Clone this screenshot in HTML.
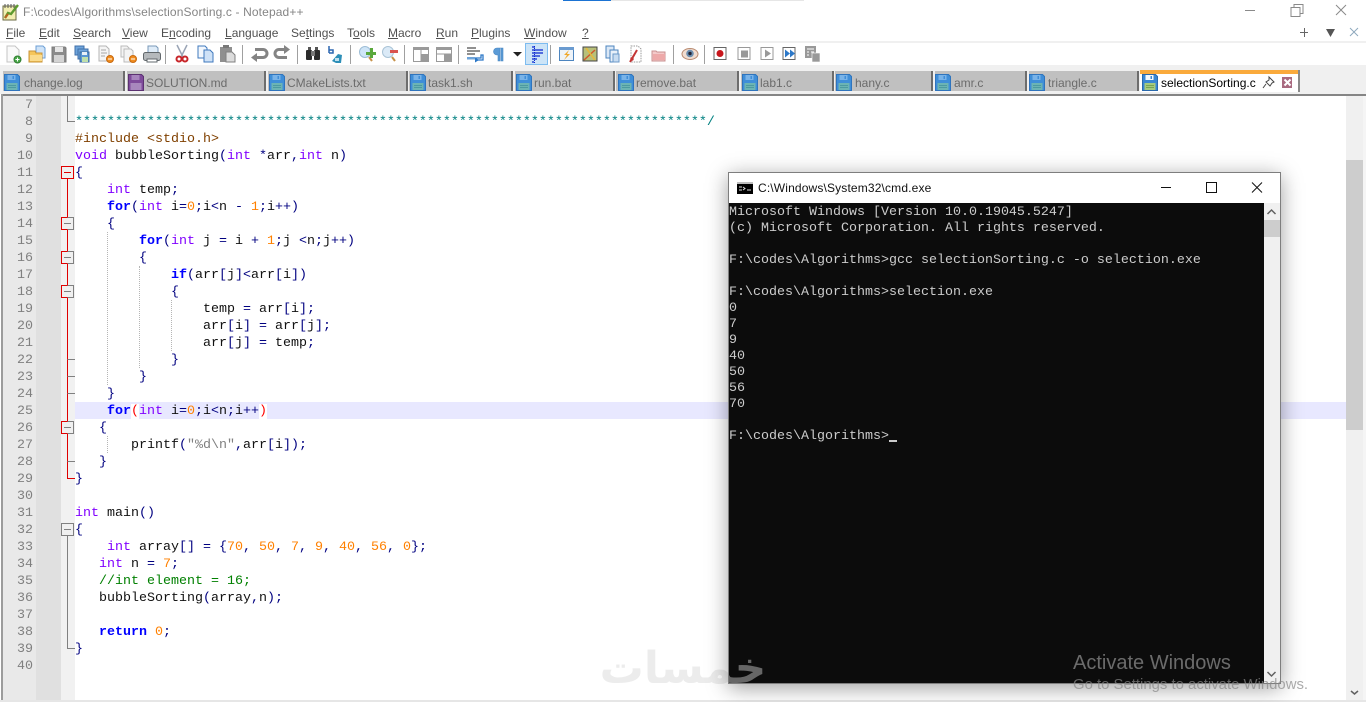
<!DOCTYPE html>
<html><head><meta charset="utf-8"><title>Notepad++</title>
<style>
html,body{margin:0;padding:0;width:1366px;height:702px;overflow:hidden;background:#fff}
.a{position:absolute;white-space:pre}
.ui{font-family:"Liberation Sans",sans-serif;font-size:12px;line-height:16px}
.m{color:#505050;top:25px}
.m u{text-decoration-thickness:1px;text-underline-offset:1px}
.t{position:absolute;top:71px;height:20px;background:#c0c0c0;border-right:2px solid #6d6d6d;box-sizing:border-box}
.tt{position:absolute;top:75px;font:12px/16px "Liberation Sans",sans-serif;color:#6b6b6b;white-space:pre}
#code{position:absolute;left:75px;top:97px;margin:0;font:13.333px/17px "Liberation Mono",monospace;color:#111;white-space:pre}
#nums{position:absolute;left:3px;top:97px;width:30px;text-align:right;margin:0;font:13.333px/17px "Liberation Mono",monospace;color:#808080;white-space:pre}
.k{color:#8000ff}.b{color:#0000ff;font-weight:bold}.n{color:#ff8000}.o{color:#000080}.g{color:#008000}.p{color:#804000}.s{color:#808080}.d{color:#008080}.r{color:#f00}
.w{background:#fff}
.ig{position:absolute;width:0;border-left:1px dotted #b5b5b5}
#con{position:absolute;left:729px;top:205px;margin:0;font:13.333px/16px "Liberation Mono",monospace;color:#ccc;white-space:pre}
</style></head><body>
<svg class="a" style="left:0;top:0" width="1366" height="2"><rect x="563" width="48" height="1" fill="#1b73d3"/><rect x="611" width="193" height="1" fill="#e6e6e6"/></svg>

<!-- app icon -->
<svg class="a" style="left:2px;top:3px" width="18" height="18" viewBox="0 0 18 18"><rect x="1" y="3" width="13" height="14" fill="#f2eeb0" stroke="#6a6a40"/><path d="M3 1v4M6 1v4M9 1v4M12 1v4" stroke="#555"/><path d="M3 15l3-5 3 1 7-9" stroke="#5d9a2f" stroke-width="2.4" fill="none"/><path d="M3 15l3-4" stroke="#b8641f" stroke-width="2"/></svg>
<div class="a ui" style="left:23px;top:4px;color:#858585;letter-spacing:.13px">F:\codes\Algorithms\selectionSorting.c - Notepad++</div>

<!-- window controls -->
<svg class="a" style="left:1240px;top:0" width="126" height="42" fill="none" stroke="#8a8a8a"><path d="M5 10.500h10"/><path d="M51 7.500h9v9h-9zM54 7.500v-3h9v9h-3"/><path d="M96 5l10 10M106 5l-10 10"/><path d="M60 32.500h8M64.500 28v9" stroke="#666"/><path d="M86 29h9l-4.500 8z" fill="#555" stroke="none"/><path d="M110 28l8 8M118 28l-8 8" stroke="#8fa9bd"/></svg>

<!-- menu -->
<div class="a ui m" style="left:6px"><u>F</u>ile</div>
<div class="a ui m" style="left:39px"><u>E</u>dit</div>
<div class="a ui m" style="left:73px"><u>S</u>earch</div>
<div class="a ui m" style="left:122px"><u>V</u>iew</div>
<div class="a ui m" style="left:161px">E<u>n</u>coding</div>
<div class="a ui m" style="left:225px"><u>L</u>anguage</div>
<div class="a ui m" style="left:291px">Se<u>t</u>tings</div>
<div class="a ui m" style="left:347px">T<u>o</u>ols</div>
<div class="a ui m" style="left:388px"><u>M</u>acro</div>
<div class="a ui m" style="left:436px"><u>R</u>un</div>
<div class="a ui m" style="left:471px"><u>P</u>lugins</div>
<div class="a ui m" style="left:524px"><u>W</u>indow</div>
<div class="a ui m" style="left:582px"><u>?</u></div>

<div class="a" style="left:0;top:41px;width:1366px;height:2px;background:#f0f0f0"></div>

<!-- toolbar -->
<svg class="a" style="left:0;top:43px" width="1366" height="24" viewBox="0 43 1366 24">
<g stroke="#a0a0a0"><path d="M165.500 45v19M242.500 45v19M297.500 45v19M350.500 45v19M404.500 45v19M458.500 45v19M550.500 45v19M673.500 45v19M704.500 45v19"/></g>
<!-- new -->
<path d="M7 46h8l4 4v12H7z" fill="#fafafa" stroke="#c4c4c4"/><circle cx="17.500" cy="59.500" r="3.500" fill="#4aa84a" stroke="#2f7d2f"/><path d="M15.500 59.500h4M17.500 57.500v4" stroke="#fff"/>
<!-- open -->
<path d="M36 46h7l2 2v10h-9z" fill="#cfe3f7" stroke="#6c9fd6"/><path d="M29 51h6l1 2h6v9H29z" fill="#f6c65a" stroke="#c8943a"/><rect x="30" y="55" width="12" height="6" fill="#fbdc8d"/>
<!-- save -->
<path d="M52 47h13l1 1v14H52z" fill="#8b8b8b" stroke="#7b7b7b"/><rect x="55" y="47" width="8" height="5" fill="#e6e6e6"/><rect x="54" y="55" width="10" height="7" fill="#d4d4d4"/>
<!-- save all -->
<path d="M75 46h9v9h-9z" fill="#6fa5dc" stroke="#3f6fa8"/><path d="M78 49h10v10H78z" fill="#6fa5dc" stroke="#3f6fa8"/><path d="M80 52h9v10h-9z" fill="#5a97d4" stroke="#3b6a9e"/><rect x="82" y="52" width="5" height="3" fill="#e8f0f8"/><rect x="82" y="57" width="6" height="5" fill="#bfe0ac"/>
<!-- close -->
<path d="M99 46h7l3 3v12H99z" fill="#f5f5f5" stroke="#b5b5b5"/><path d="M101 50h5M101 53h6M101 56h4" stroke="#a8a8a8"/><circle cx="110" cy="59" r="3.500" fill="#f08c1e" stroke="#c86a10"/><path d="M108 59h4" stroke="#fff"/>
<!-- close all -->
<path d="M121 46h6l2 2v9h-8z" fill="#f4f4f4" stroke="#bbb"/><path d="M124 49h7l2 2v11h-9z" fill="#f4f4f4" stroke="#bbb"/><circle cx="133" cy="59" r="3.500" fill="#f08c1e" stroke="#c86a10"/><path d="M131 59h4" stroke="#fff"/>
<!-- print -->
<path d="M148 46h8l2 2v5h-10z" fill="#dfecf8" stroke="#7898b8"/><rect x="143.500" y="52.500" width="17" height="8" rx="2" fill="#b5b9bc" stroke="#62686c"/><rect x="147" y="59" width="10" height="3" fill="#fff" stroke="#62686c"/>
<!-- cut -->
<path d="M181 57L187 45M183 57L177 45" stroke="#9aa5b5" stroke-width="1.500"/><circle cx="179" cy="59" r="2.500" fill="none" stroke="#c8262a" stroke-width="2"/><circle cx="185" cy="59" r="2.500" fill="none" stroke="#c8262a" stroke-width="2"/>
<!-- copy -->
<path d="M198 46h7l2 2v10h-9z" fill="#f2f7fd" stroke="#3f78bd"/><path d="M204 50h6l3 3v9h-9z" fill="#cfe2f7" stroke="#3f78bd"/>
<!-- paste -->
<path d="M220 47h12v15h-12z" fill="#8f8f8f"/><path d="M226 52h6l3 3v7h-9z" fill="#dcdcdc" stroke="#808080"/><rect x="223" y="45" width="6" height="3" fill="#777"/>
<!-- undo redo -->
<path d="M255 49.500h8a4 4 0 0 1 0 8h-6" fill="none" stroke="#848484" stroke-width="3"/><path d="M251 57.500l6-4.500v9z" fill="#848484"/>
<path d="M286 49.500h-7a4 4 0 0 0 0 8h8" fill="none" stroke="#848484" stroke-width="3"/><path d="M290 49.500l-6-4.500v9z" fill="#848484"/>
<!-- find -->
<rect x="306" y="50" width="6" height="10" rx="1" fill="#2b2b2b"/><rect x="314" y="50" width="6" height="10" rx="1" fill="#2b2b2b"/><rect x="311" y="51" width="4" height="5" fill="#777"/><rect x="308" y="47" width="3" height="3" fill="#555"/><rect x="315" y="47" width="3" height="3" fill="#555"/>
<!-- replace -->
<path d="M329 46v7M329 50h4v3h-4" fill="none" stroke="#2c67b0" stroke-width="1.500"/><path d="M332 61l6-7 4 1-1 8h-5z" fill="#2d8fb8"/><path d="M335 58h4v3h-4z" fill="#bfe0ee"/>
<!-- zoom in / out -->
<circle cx="365" cy="52" r="5.500" fill="#cfe5f7" stroke="#9dbdd6"/><path d="M369 57l3 4" stroke="#c7924a" stroke-width="2"/><path d="M366 52h4v-4h3v4h3v3h-3v3h-3v-3h-4z" fill="#5aa83c"/>
<circle cx="388" cy="52" r="5.500" fill="#dbeaf7" stroke="#a9c3d6"/><path d="M392 57l3 4" stroke="#c7924a" stroke-width="2"/><rect x="390" y="50" width="8" height="3" fill="#d9534f"/>
<!-- sync -->
<path d="M413.500 47.500h15v14h-15zM421 47v14" fill="#fff" stroke="#9a9a9a"/><rect x="421" y="54" width="8" height="8" fill="#9a9a9a"/><rect x="413" y="47" width="16" height="3" fill="#9a9a9a"/>
<path d="M436.500 47.500h15v14h-15z" fill="#fff" stroke="#9a9a9a"/><rect x="436" y="47" width="16" height="3" fill="#9a9a9a"/><rect x="444" y="54" width="8" height="8" fill="#9a9a9a"/><path d="M436 54h16" stroke="#9a9a9a"/>
<!-- wrap -->
<path d="M467 48h9M467 51h13M467 54h8" stroke="#222"/><path d="M467 58h14v-3h2v5h-8" fill="none" stroke="#2c78c8" stroke-width="1.300"/><rect x="467" y="57" width="8" height="2.500" fill="#6ea4da"/><path d="M479 60l-4-2.500v5z" fill="#2c78c8"/>
<!-- pilcrow -->
<path d="M501 48h-4a3.500 3.500 0 0 0 0 7h1v6h2V48zM501 48h2v13h-2z" fill="#5b9bd6" stroke="#4a88c4" stroke-width=".6"/>
<path d="M513 52h9l-4.500 4.500z" fill="#222"/>
<!-- indent guide (active) -->
<rect x="525.500" y="43.500" width="22" height="21" fill="#cce4f7" stroke="#7dbcf0"/>
<path d="M532 47h3M532 50h11M532 53h11M532 56h8M532 59h5M532 62h2" stroke="#0a24d0" stroke-width="1.300"/><path d="M534.500 46v17" stroke="#0a24d0" stroke-dasharray="1 1"/>
<!-- udl etc -->
<rect x="559.500" y="47.500" width="14" height="13" fill="#eef3f8" stroke="#4d85bf"/><rect x="559" y="47" width="15" height="3" fill="#6a9bd0"/><path d="M569 50l-5 5h3l-3 5 6-6h-3l2-4z" fill="#f0a82a"/>
<rect x="583" y="47" width="14" height="14" fill="#b7c07a" stroke="#444"/><path d="M584 60l11-10" stroke="#d2572b" stroke-width="1.500"/><path d="M586 48l9 12" stroke="#e6b83d" stroke-width="1.500"/>
<path d="M606 46h8v12h-8z" fill="#dbe8f6" stroke="#4d85bf"/><path d="M610 50h8v12h-8z" fill="#e8f0f9" stroke="#4d85bf"/><path d="M613 54h6v8h-6z" fill="#c8dcf1" stroke="#6c9ac9"/>
<path d="M631 46h7l3 3v13h-10z" fill="#fff" stroke="#9a9a9a" stroke-dasharray="1.500 1"/><path d="M630 62l7-12" stroke="#c33535" stroke-width="2"/><circle cx="632" cy="59" r="1.700" fill="#c33535"/>
<path d="M652 51h4l1 1h8v9h-13z" fill="#f3c9c9" stroke="#c99090"/><rect x="653" y="54" width="12" height="6" fill="#eda9a9"/>
<!-- eye -->
<ellipse cx="690" cy="54" rx="8" ry="5.500" fill="#f2ddd0" stroke="#b98a70"/><circle cx="690" cy="53.500" r="3.800" fill="#6e8faf"/><circle cx="690" cy="53.500" r="1.700" fill="#223"/>
<!-- macro -->
<rect x="714" y="47.500" width="12" height="12" fill="#fff" stroke="#666"/><circle cx="720" cy="53.500" r="3.500" fill="#c8161c"/>
<rect x="738" y="47.500" width="12" height="12" fill="#fff" stroke="#999"/><rect x="741" y="50.500" width="7" height="7" fill="#999"/>
<rect x="761" y="47.500" width="12" height="12" fill="#fff" stroke="#999"/><path d="M765 49.500l6 4-6 4z" fill="#999"/>
<rect x="783" y="47.500" width="12" height="12" fill="#fff" stroke="#666"/><path d="M785 49.500l5 4-5 4zM790 49.500l5 4-5 4z" fill="#2c78c8"/>
<rect x="805" y="46" width="11" height="12" fill="#999"/><path d="M807 49h7M807 52h2M811 52h3M807 55h2" stroke="#fff"/><rect x="812" y="53" width="8" height="9" fill="#999" stroke="#fff" stroke-width=".6"/>
</svg>

<div class="a" style="left:0;top:65px;width:1366px;height:29px;background:#f0f0f0"></div>

<svg width="0" height="0" style="position:absolute"><symbol id="f" viewBox="0 0 16 17"><path d="M.5.500h13l2 2v14H.500z" fill="#3f8ed8" stroke="#2f74bd"/><rect x="3.500" y="1" width="8" height="5" fill="#79b3e8"/><rect x="8.500" y="2" width="1.500" height="3" fill="#3f8ed8"/><rect x="2.500" y="9" width="11" height="7" fill="#6cb4b4"/><path d="M4 11.500h8M4 13.500h8" stroke="#4c9aa0"/></symbol>
<symbol id="fp" viewBox="0 0 16 17"><path d="M.5.500h13l2 2v14H.500z" fill="#7e4a9a" stroke="#5c3272"/><rect x="3.500" y="1" width="8" height="5" fill="#a784bd"/><rect x="2.500" y="9" width="11" height="7" fill="#a887bd"/></symbol>
<symbol id="fa" viewBox="0 0 16 17"><path d="M.5.500h13l2 2v14H.500z" fill="#3a87d2" stroke="#2a69ad"/><rect x="3.500" y="1" width="8" height="5" fill="#f4f8fc"/><rect x="8.500" y="2" width="1.500" height="3" fill="#3a87d2"/><rect x="2.500" y="9" width="11" height="7" fill="#a6ca7e"/><path d="M4 11.500h8M4 13.500h8" stroke="#78a452"/></symbol></svg>

<!-- tabs -->
<div class="t" style="left:3px;width:122px"></div>
<div class="t" style="left:127px;width:139px"></div>
<div class="t" style="left:268px;width:140px"></div>
<div class="t" style="left:409px;width:104px"></div>
<div class="t" style="left:515px;width:100px"></div>
<div class="t" style="left:616px;width:123px"></div>
<div class="t" style="left:741px;width:93px"></div>
<div class="t" style="left:835px;width:98px"></div>
<div class="t" style="left:935px;width:92px"></div>
<div class="t" style="left:1029px;width:110px"></div>
<div class="a" style="left:1140px;top:70px;width:158px;height:22px;background:#fff;border-right:2px solid #8a8a8a"></div>
<div class="a" style="left:1140px;top:70px;width:158px;height:4px;background:#faaa3c"></div>

<svg class="a" style="left:4px;top:74px" width="16" height="17"><use href="#f"/></svg>
<svg class="a" style="left:128px;top:74px" width="16" height="17"><use href="#fp"/></svg>
<svg class="a" style="left:269px;top:74px" width="16" height="17"><use href="#f"/></svg>
<svg class="a" style="left:410px;top:74px" width="16" height="17"><use href="#f"/></svg>
<svg class="a" style="left:516px;top:74px" width="16" height="17"><use href="#f"/></svg>
<svg class="a" style="left:618px;top:74px" width="16" height="17"><use href="#f"/></svg>
<svg class="a" style="left:742px;top:74px" width="16" height="17"><use href="#f"/></svg>
<svg class="a" style="left:836px;top:74px" width="16" height="17"><use href="#f"/></svg>
<svg class="a" style="left:935px;top:74px" width="16" height="17"><use href="#f"/></svg>
<svg class="a" style="left:1029px;top:74px" width="16" height="17"><use href="#f"/></svg>
<svg class="a" style="left:1142px;top:74px" width="16" height="17"><use href="#fa"/></svg>

<div class="tt" style="left:24px">change.log</div>
<div class="tt" style="left:146px">SOLUTION.md</div>
<div class="tt" style="left:287px">CMakeLists.txt</div>
<div class="tt" style="left:428px">task1.sh</div>
<div class="tt" style="left:534px">run.bat</div>
<div class="tt" style="left:636px">remove.bat</div>
<div class="tt" style="left:760px">lab1.c</div>
<div class="tt" style="left:855px">hany.c</div>
<div class="tt" style="left:954px">amr.c</div>
<div class="tt" style="left:1048px">triangle.c</div>
<div class="tt" style="left:1161px;color:#000">selectionSorting.c</div>
<svg class="a" style="left:1262px;top:75px" width="30" height="16" fill="none"><path d="M7 2l5 5-2 1-2 3-4-4 3-2zM4 9l-3 4" stroke="#444"/><rect x="20" y="2" width="11" height="11" fill="#a96a80"/><path d="M22.500 4.500l6 6M28.500 4.500l-6 6" stroke="#fff" stroke-width="2"/></svg>

<div class="a" style="left:1px;top:94px;width:1365px;height:2px;background:#858585"></div>

<!-- editor -->
<div class="a" style="left:1px;top:94px;width:2px;height:606px;background:#9c9c9c"></div>
<div class="a" style="left:3px;top:96px;width:33px;height:604px;background:#e9e9e9"></div>
<div class="a" style="left:36px;top:96px;width:25px;height:604px;background:#e0e0e0"></div>
<div class="a" style="left:61px;top:96px;width:14px;height:604px;background:#f1f1f1"></div>
<div class="a" style="left:75px;top:402px;width:1271px;height:17px;background:#e8e8ff"></div>
<div class="a" style="left:0;top:700px;width:1366px;height:2px;background:#e6e6e6"></div>

<pre id="nums">7
8
9
10
11
12
13
14
15
16
17
18
19
20
21
22
23
24
25
26
27
28
29
30
31
32
33
34
35
36
37
38
39
40</pre>

<svg class="a" style="left:61px;top:96px" width="14" height="604" viewBox="61 96 14 604" fill="none">
<path d="M67.500 96v25.500H75" stroke="#808080"/>
<path d="M67.500 172v306.500H75" stroke="#e00000"/>
<path d="M67.500 359.500H75M67.500 376.500H75M67.500 393.500H75M67.500 461.500H75" stroke="#808080"/>
<path d="M67.500 529v119.500H75" stroke="#808080"/>
<g fill="#f0f0f0" stroke="#808080">
<rect x="61.500" y="217.500" width="12" height="12"/><rect x="61.500" y="251.500" width="12" height="12"/><rect x="61.500" y="285.500" width="12" height="12"/><rect x="61.500" y="421.500" width="12" height="12"/>
<rect x="61.500" y="523.500" width="12" height="12"/>
</g>
<rect x="61.500" y="166.500" width="12" height="12" fill="#f0f0f0" stroke="#e00000"/>
<path d="M64 172.500h7" stroke="#e00000"/>
<path d="M64 223.500h7M64 257.500h7M64 291.500h7M64 427.500h7M64 529.500h7" stroke="#808080"/>
<path d="M67.500 217.500h-6v12h6M67.500 251.500h-6v12h6M67.500 285.500h-6v12h6M67.500 421.500h-6v12h6" stroke="#e00000"/>
</svg>

<div class="ig" style="left:107px;top:232px;height:153px"></div>
<div class="ig" style="left:139px;top:266px;height:102px"></div>
<div class="ig" style="left:171px;top:300px;height:51px"></div>
<div class="ig" style="left:107px;top:436px;height:17px"></div>

<pre id="code">

<span class="d">*******************************************************************************/</span>
<span class="p">#include &lt;stdio.h&gt;</span>
<span class="k">void</span> bubbleSorting<span class="o">(</span><span class="k">int</span> <span class="o">*</span>arr<span class="o">,</span><span class="k">int</span> n<span class="o">)</span>
<span class="o">{</span>
    <span class="k">int</span> temp<span class="o">;</span>
    <span class="b">for</span><span class="o">(</span><span class="k">int</span> i<span class="o">=</span><span class="n">0</span><span class="o">;</span>i<span class="o">&lt;</span>n <span class="o">-</span> <span class="n">1</span><span class="o">;</span>i<span class="o">++)</span>
    <span class="o">{</span>
        <span class="b">for</span><span class="o">(</span><span class="k">int</span> j <span class="o">=</span> i <span class="o">+</span> <span class="n">1</span><span class="o">;</span>j <span class="o">&lt;</span>n<span class="o">;</span>j<span class="o">++)</span>
        <span class="o">{</span>
            <span class="b">if</span><span class="o">(</span>arr<span class="o">[</span>j<span class="o">]&lt;</span>arr<span class="o">[</span>i<span class="o">])</span>
            <span class="o">{</span>
                temp <span class="o">=</span> arr<span class="o">[</span>i<span class="o">];</span>
                arr<span class="o">[</span>i<span class="o">]</span> <span class="o">=</span> arr<span class="o">[</span>j<span class="o">];</span>
                arr<span class="o">[</span>j<span class="o">]</span> <span class="o">=</span> temp<span class="o">;</span>
            <span class="o">}</span>
        <span class="o">}</span>
    <span class="o">}</span>
    <span class="b">for</span><span class="r w">(</span><span class="k">int</span> i<span class="o">=</span><span class="n">0</span><span class="o">;</span>i<span class="o">&lt;</span>n<span class="o">;</span>i<span class="o">++</span><span class="r w">)</span>
   <span class="o">{</span>
       printf<span class="o">(</span><span class="s">"%d\n"</span><span class="o">,</span>arr<span class="o">[</span>i<span class="o">]);</span>
   <span class="o">}</span>
<span class="o">}</span>

<span class="k">int</span> main<span class="o">()</span>
<span class="o">{</span>
    <span class="k">int</span> array<span class="o">[]</span> <span class="o">=</span> <span class="o">{</span><span class="n">70</span><span class="o">,</span> <span class="n">50</span><span class="o">,</span> <span class="n">7</span><span class="o">,</span> <span class="n">9</span><span class="o">,</span> <span class="n">40</span><span class="o">,</span> <span class="n">56</span><span class="o">,</span> <span class="n">0</span><span class="o">};</span>
   <span class="k">int</span> n <span class="o">=</span> <span class="n">7</span><span class="o">;</span>
   <span class="g">//int element = 16;</span>
   bubbleSorting<span class="o">(</span>array<span class="o">,</span>n<span class="o">);</span>

   <span class="b">return</span> <span class="n">0</span><span class="o">;</span>
<span class="o">}</span></pre>

<!-- main scrollbar -->
<div class="a" style="left:1346px;top:96px;width:17px;height:604px;background:#f0f0f0"></div>
<div class="a" style="left:1346px;top:160px;width:17px;height:270px;background:#cdcdcd"></div>
<div class="a" style="left:1363px;top:96px;width:3px;height:604px;background:#f5f5f5"></div>
<svg class="a" style="left:1346px;top:96px" width="17" height="604" fill="none" stroke="#606060" stroke-width="1.500"><path d="M5 595l3.500 3 3.500-3"/></svg>

<!-- watermark -->
<div class="a" dir="rtl" style="left:598px;top:643px;width:170px;text-align:center;font:bold 44px/52px 'DejaVu Sans',sans-serif;color:#ececec">خمسات</div>

<!-- cmd window -->
<div class="a" style="left:728px;top:172px;width:553px;height:512px;box-sizing:border-box;background:#fff;border:1px solid #7e7e7e;box-shadow:0 4px 20px rgba(0,0,0,.38)"></div>
<div class="a" style="left:729px;top:203px;width:535px;height:480px;background:#0c0c0c"></div>
<div class="a" style="left:1264px;top:203px;width:16px;height:480px;background:#f0f0f0"></div>
<div class="a" style="left:1264px;top:220px;width:16px;height:17px;background:#cdcdcd"></div>
<svg class="a" style="left:1264px;top:203px" width="16" height="480" fill="none" stroke="#606060" stroke-width="1.500"><path d="M3.500 11l4-4 4 4"/><path d="M3.500 469l4 4 4-4"/></svg>
<svg class="a" style="left:737px;top:182px" width="16" height="12"><rect width="16" height="12" fill="#000"/><rect x="0" y="0" width="16" height="2" fill="#bdbdbd"/><path d="M2 5h3M2 8h3M6 5l2 1.500-2 1.500M10 8h4" stroke="#ddd" fill="none"/></svg>
<div class="a ui" style="left:758px;top:180px;color:#111;letter-spacing:.15px">C:\Windows\System32\cmd.exe</div>
<svg class="a" style="left:1150px;top:173px" width="130" height="30" fill="none" stroke="#111"><path d="M11 14.500h10"/><path d="M56.500 9.500h10v10h-10z"/><path d="M102 9.500l10 10M112 9.500l-10 10"/></svg>
<pre id="con">Microsoft Windows [Version 10.0.19045.5247]
(c) Microsoft Corporation. All rights reserved.

F:\codes\Algorithms&gt;gcc selectionSorting.c -o selection.exe

F:\codes\Algorithms&gt;selection.exe
0
7
9
40
50
56
70

F:\codes\Algorithms&gt;</pre>
<div class="a" style="left:889px;top:440px;width:8px;height:2px;background:#ccc"></div>

<!-- watermark piece over cmd -->
<div class="a" style="left:729px;top:650px;width:36px;height:33px;overflow:hidden"><div class="a" dir="rtl" style="left:-131px;top:-7px;width:170px;text-align:center;font:bold 44px/52px 'DejaVu Sans',sans-serif;color:#666">خمسات</div></div>

<!-- activation -->
<div class="a" style="left:1073px;top:651px;font:20px/24px 'Liberation Sans',sans-serif;color:rgba(125,125,125,.85)">Activate Windows</div>
<div class="a" style="left:1073px;top:677px;font:14.900px/17px 'Liberation Sans',sans-serif;color:rgba(135,135,135,.7)">Go to Settings to activate Windows.</div>
</body></html>
